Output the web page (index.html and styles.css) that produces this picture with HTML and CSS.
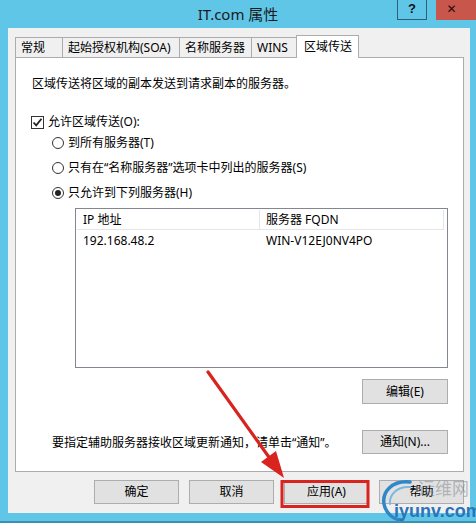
FILE: index.html
```html
<!DOCTYPE html>
<html lang="zh-CN">
  <head>
    <meta charset="UTF-8" />
    <title>IT.com 属性</title>
    <link rel="stylesheet" href="styles.css">
  </head>
  <body>
    <div class="window">
      <div class="titlebar">
        <span class="title-spacer"></span>
        <span class="title">IT.com 属性</span>
        <span class="caption-btns">
          <span class="cap-help">?</span>
          <span class="cap-close">✕</span>
        </span>
      </div>

      <div class="client">
        <div class="tabs">
          <span class="tab">常规</span>
          <span class="tab">起始授权机构(SOA)</span>
          <span class="tab">名称服务器</span>
          <span class="tab">WINS</span>
          <span class="tab active">区域传送</span>
        </div>

        <div class="panel">
          <p class="desc">区域传送将区域的副本发送到请求副本的服务器。</p>

          <label class="check-row">
            <span class="checkbox">
              <svg width="11" height="11" viewBox="0 0 11 11"><path d="M1.5 5.5 L4.2 8.3 L9.5 1.8" fill="none" stroke="#222" stroke-width="1.8"/></svg>
            </span>
            允许区域传送(O):
          </label>

          <div class="radios">
            <label class="radio-row"><span class="radio"></span>到所有服务器(T)</label>
            <label class="radio-row"><span class="radio"></span>只有在“名称服务器”选项卡中列出的服务器(S)</label>
            <label class="radio-row"><span class="radio checked"></span>只允许到下列服务器(H)</label>
          </div>

          <div class="listview">
            <div class="lv-head">
              <span class="col-ip">IP 地址</span>
              <span class="col-fqdn">服务器 FQDN</span>
            </div>
            <div class="lv-row">
              <span class="col-ip">192.168.48.2</span>
              <span class="col-fqdn">WIN-V12EJ0NV4PO</span>
            </div>
          </div>

          <div class="edit-row">
            <button class="btn">编辑(E)</button>
          </div>

          <div class="notify-row">
            <span class="notify-text">要指定辅助服务器接收区域更新通知，请单击“通知”。</span>
            <button class="btn">通知(N)...</button>
          </div>
        </div>

        <div class="footer">
          <button class="btn footer-btn">确定</button>
          <button class="btn footer-btn">取消</button>
          <button class="btn footer-btn">应用(A)</button>
          <button class="btn footer-btn">帮助</button>
        </div>
      </div>

      <!-- annotation drawn over the screenshot -->
      <svg class="annotation" width="476" height="523" viewBox="0 0 476 523">
        <line x1="208" y1="372" x2="271" y2="460" stroke="#d9231f" stroke-width="3.2" stroke-linecap="round"/>
        <polygon points="284,478 276,451 261,462" fill="#d9231f"/>
        <rect x="282" y="481.5" width="86" height="25" fill="none" stroke="#d9231f" stroke-width="3"/>
      </svg>

      <div class="watermark">
        <svg class="wm-swirl" width="40" height="44" viewBox="0 0 40 44">
          <path d="M30 4 C12 2 2 14 4 26 C6 36 14 42 22 42" fill="none" stroke="#2f86c8" stroke-width="3.5" stroke-linecap="round"/>
          <path d="M30 9 C17 8 9 17 10 26" fill="none" stroke="#7ab8e2" stroke-width="2" stroke-linecap="round"/>
        </svg>
        <span class="wm-cn">运维网</span>
        <span class="wm-en">iyunv.com</span>
      </div>
    </div>
  </body>
</html>
```

FILE: styles.css
```css
body {
  margin: 0;
  padding: 0;
  font-family: "Noto Sans", "Noto Sans CJK SC", sans-serif;
  font-size: 12px;
  color: #000;
  background-color: #5fc6e8;
}

.window {
  position: relative;
  width: 476px;
  height: 523px;
  background-color: #5fc6e8;
  display: flex;
  flex-direction: column;
  box-sizing: border-box;
  padding: 0 6px 8px 8px;
  border-bottom: 2px solid #3b8fb0;
  overflow: hidden;
}

/* Title bar */
.titlebar {
  height: 30px;
  display: grid;
  grid-template-columns: 71px 1fr 79px;
  align-items: start;
  margin-right: -6px;
  background-image: linear-gradient(to right, transparent 428px, #c8564b 428px);
  background-size: 100% 20px;
  background-repeat: no-repeat;
}

.title {
  font-size: 15px;
  line-height: 28px;
  color: #1b1b1b;
  text-align: center;
}

.caption-btns {
  display: flex;
  height: 20px;
}

.cap-help {
  width: 30px;
  height: 20px;
  border: 1px solid #2f5f78;
  border-top: none;
  box-sizing: border-box;
  text-align: center;
  font-family: "Liberation Sans", sans-serif;
  font-weight: bold;
  font-size: 13px;
  line-height: 18px;
  color: #111;
  background-color: #5fc6e8;
}

.cap-close {
  width: 49px;
  height: 20px;
  text-align: center;
  font-family: "DejaVu Sans", sans-serif;
  font-weight: bold;
  font-size: 12px;
  line-height: 18px;
  color: #2a0c0a;
}

/* Client area */
.client {
  flex-grow: 1;
  background-color: #f0f0f0;
  padding: 7px 6px 9px 7px;
  display: flex;
  flex-direction: column;
}

.tabs {
  display: flex;
  align-items: flex-end;
  height: 22px;
  padding-left: 1px;
  position: relative;
  z-index: 1;
}

.tab {
  height: 20px;
  line-height: 20px;
  padding: 0 5px;
  border: 1px solid #acacac;
  border-bottom: none;
  margin-left: -1px;
  box-sizing: border-box;
  background-color: #f0f0f0;
  white-space: nowrap;
}

.tab:nth-child(1) { width: 48px; }
.tab:nth-child(2) { width: 118px; }
.tab:nth-child(3) { width: 73px; }
.tab:nth-child(4) { width: 46px; }

.tab.active {
  width: 63px;
  height: 23px;
  line-height: 21px;
  background-color: #fff;
  margin-bottom: -1px;
  padding: 0 7px;
}

.panel {
  background-color: #fff;
  border: 1px solid #acacac;
  height: 415px;
  box-sizing: border-box;
  padding: 18px 15px 0 16px;
  display: flex;
  flex-direction: column;
}

.desc {
  margin: 0;
  line-height: 16px;
}

.check-row {
  display: flex;
  align-items: center;
  margin-top: 22px;
  line-height: 16px;
  margin-left: -1px;
}

.checkbox {
  width: 13px;
  height: 13px;
  border: 1px solid #333;
  box-sizing: border-box;
  display: flex;
  align-items: center;
  justify-content: center;
  margin-right: 4px;
}

.radios {
  display: flex;
  flex-direction: column;
  gap: 9px;
  margin-top: 5px;
  margin-left: 20px;
}

.radio-row {
  display: flex;
  align-items: center;
  line-height: 16px;
}

.radio {
  width: 12px;
  height: 12px;
  border: 1px solid #333;
  border-radius: 50%;
  box-sizing: border-box;
  margin-right: 4px;
  display: flex;
  align-items: center;
  justify-content: center;
}

.radio.checked::after {
  content: "";
  width: 6px;
  height: 6px;
  border-radius: 50%;
  background-color: #222;
}

/* List view */
.listview {
  margin: 7px 0 0 43px;
  height: 160px;
  border: 1px solid #828790;
  box-sizing: border-box;
  padding: 1px 3px 0 1px;
}

.lv-head,
.lv-row {
  display: flex;
  line-height: 19px;
}

.lv-head {
  border-bottom: 1px solid #e5e5e5;
  border-right: 1px solid #e5e5e5;
}

.col-ip {
  width: 183px;
  padding-left: 6px;
  box-sizing: border-box;
}

.lv-head .col-ip {
  border-right: 1px solid #e5e5e5;
}

.col-fqdn {
  padding-left: 6px;
}

.lv-row {
  padding-top: 1px;
}

/* Buttons */
.btn {
  font-family: inherit;
  font-size: 12px;
  color: #000;
  background-color: #e1e1e1;
  border: 1px solid #adadad;
  width: 86px;
  height: 25px;
  padding: 0;
  line-height: 22px;
}

.edit-row {
  display: flex;
  justify-content: flex-end;
  margin-top: 11px;
}

.notify-row {
  display: flex;
  justify-content: space-between;
  align-items: center;
  margin-top: 26px;
  padding-left: 20px;
}

.notify-row .btn {
  height: 24px;
}

.footer {
  display: flex;
  justify-content: flex-end;
  gap: 10px;
  margin-top: 8px;
}

.footer-btn {
  width: 85px;
  height: 24px;
}

/* Overlays */
.annotation {
  position: absolute;
  top: 0;
  left: 0;
  pointer-events: none;
}

.watermark {
  position: absolute;
  left: 378px;
  top: 476px;
  width: 98px;
  height: 47px;
  pointer-events: none;
}

.wm-swirl {
  position: absolute;
  left: 2px;
  top: 2px;
}

.wm-cn {
  position: absolute;
  left: 40px;
  top: 2px;
  font-family: "Noto Sans CJK SC", sans-serif;
  font-size: 17px;
  line-height: 20px;
  color: rgba(110, 120, 130, 0.45);
}

.wm-en {
  position: absolute;
  left: 16px;
  top: 25px;
  font-family: "Liberation Sans", sans-serif;
  font-weight: bold;
  font-size: 18px;
  line-height: 20px;
  color: #2b74b9;
}
```
